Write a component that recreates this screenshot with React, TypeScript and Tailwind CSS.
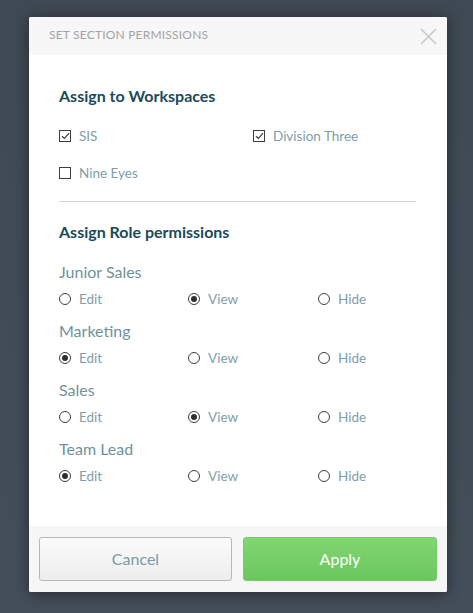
const roles = [
  { name: 'Junior Sales', value: 'View' },
  { name: 'Marketing', value: 'Edit' },
  { name: 'Sales', value: 'View' },
  { name: 'Team Lead', value: 'Edit' },
];

const workspaces = [
  { name: 'SIS', checked: true },
  { name: 'Division Three', checked: true },
  { name: 'Nine Eyes', checked: false },
];

function Checkbox({ checked }: { checked: boolean }) {
  return (
    <span className="flex h-[12px] w-[12px] items-center justify-center border-[1.5px] border-[#3d3d3d] bg-white">
      {checked && (
        <svg width="9" height="8" viewBox="0 0 9 8" fill="none">
          <path d="M1 4.2 L3.4 6.4 L8 1.2" stroke="#3d3d3d" strokeWidth="1.2" />
        </svg>
      )}
    </span>
  );
}

function Radio({ checked }: { checked: boolean }) {
  return (
    <span className="flex h-[12px] w-[12px] items-center justify-center rounded-full border border-[#3d3d3d] bg-white">
      {checked && <span className="h-[6px] w-[6px] rounded-full bg-[#2f2f2f]" />}
    </span>
  );
}

export default function App() {
  return (
    <div
      className="h-[613px] w-full overflow-hidden bg-gradient-to-b from-[#3f4953] to-[#444e59] pt-[17px]"
      style={{ fontFamily: 'Lato, "Open Sans", sans-serif' }}
    >
      <div className="ml-[29px] w-[418px] overflow-hidden rounded-[2px] bg-white shadow-[0_2px_14px_rgba(0,0,0,0.45)]">
        <div className="flex h-[38px] items-center justify-between bg-[#f7f7f7] pb-[3px] pl-[20px] pr-[10px]">
          <span className="text-[12px] tracking-[0.2px] text-[#a3a3a3]">SET SECTION PERMISSIONS</span>
          <svg width="17" height="17" viewBox="0 0 17 17" className="mt-[3px]">
            <path d="M1 1 L16 16 M16 1 L1 16" stroke="#c9c9c9" strokeWidth="1.6" />
          </svg>
        </div>

        <div className="px-[30px] pt-[31px] pb-[40px]">
          <h2 className="text-[16px] leading-[20px] font-bold text-[#1c4a5a]">Assign to Workspaces</h2>
          <div className="mt-[20px] grid grid-cols-[194px_1fr] gap-y-[17px]">
            {workspaces.map((w) => (
              <label key={w.name} className="flex h-[20px] items-center gap-[8px]">
                <Checkbox checked={w.checked} />
                <span className="text-[13.5px] text-[#7e9ea8]">{w.name}</span>
              </label>
            ))}
          </div>

          <div className="mt-[18px] h-px w-[357px] bg-[#d3d3d3]" />

          <h2 className="mt-[20px] text-[16px] leading-[20px] font-bold text-[#1c4a5a]">Assign Role permissions</h2>

          <div className="mt-[20px] flex flex-col gap-[12px]">
            {roles.map((r) => (
              <div key={r.name}>
                <div className="text-[16px] leading-[20px] text-[#6f929c]">{r.name}</div>
                <div className="mt-[7px] grid grid-cols-[129px_130px_1fr]">
                  {['Edit', 'View', 'Hide'].map((opt) => (
                    <label key={opt} className="flex h-[20px] items-center gap-[8px]">
                      <Radio checked={r.value === opt} />
                      <span className="text-[13.5px] text-[#7e9ea8]">{opt}</span>
                    </label>
                  ))}
                </div>
              </div>
            ))}
          </div>
        </div>

        <div className="flex gap-[11px] bg-[#f6f6f6] px-[10px] py-[11px]">
          <button className="h-[44px] w-[193px] rounded-[3px] border border-[#b8b8b8] bg-gradient-to-b from-[#fbfbfb] to-[#ededed] text-[16px] text-[#7c9aa4]">
            Cancel
          </button>
          <button className="h-[44px] w-[194px] rounded-[3px] border border-[#72cb65] bg-gradient-to-b from-[#80d672] to-[#6cc75f] text-[16px] text-white">
            Apply
          </button>
        </div>
      </div>
    </div>
  );
}
